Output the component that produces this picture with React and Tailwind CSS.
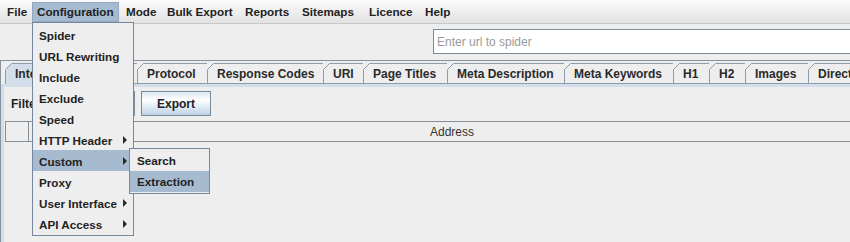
import React from "react";

function Arrow() {
  return (
    <svg width="4" height="8" viewBox="0 0 4 8" className="absolute right-[6px] top-[7px]">
      <polygon points="0,0 4,4 0,8" fill="#2a2a2a" />
    </svg>
  );
}

function Tab({ label, w, selected }) {
  return (
    <div
      className={
        selected
          ? "relative shrink-0 h-[21px] border-l border-t border-[#8c9cac] bg-[#d3deea] flex items-center pl-[9px] whitespace-nowrap"
          : "relative shrink-0 h-[21px] border-l border-t border-b border-[#8c9cac] bg-[#eeeeee] flex items-center pl-[9px] whitespace-nowrap"
      }
      style={{ width: w }}
    >
      <svg width="7" height="7" viewBox="0 0 7 7" className="absolute left-[-1px] top-[-1px]">
        <polygon points="0,0 7,0 0,7" fill="#eeeeee" />
        <line x1="0.5" y1="6.5" x2="6.5" y2="0.5" stroke="#8c9cac" strokeWidth="1" />
      </svg>
      {label}
    </div>
  );
}

const menuItems = [
  { label: "Spider" },
  { label: "URL Rewriting" },
  { label: "Include" },
  { label: "Exclude" },
  { label: "Speed" },
  { label: "HTTP Header", arrow: true },
  { label: "Custom", arrow: true, active: true },
  { label: "Proxy" },
  { label: "User Interface", arrow: true },
  { label: "API Access", arrow: true },
];

const tabs = [
  { label: "Internal", w: 65, selected: true },
  { label: "External", w: 67 },
  { label: "Protocol", w: 70 },
  { label: "Response Codes", w: 116 },
  { label: "URI", w: 40 },
  { label: "Page Titles", w: 84 },
  { label: "Meta Description", w: 117 },
  { label: "Meta Keywords", w: 109 },
  { label: "H1", w: 36 },
  { label: "H2", w: 36 },
  { label: "Images", w: 63 },
  { label: "Directives", w: 80 },
];

export default function App() {
  return (
    <div className="relative w-[850px] h-[242px] overflow-hidden bg-[#eeeeee] font-['Liberation_Sans',Arial,sans-serif] text-[#222222]">
      {/* Menu bar */}
      <div className="flex h-[24px] pt-[2px] pl-[2px] border-b border-[#c8c8c8] bg-linear-to-b from-[#fbfbfb] to-[#e2e2e2] text-[11.7px] font-bold">
        <div className="h-[20px] w-[30px] pl-[5px] flex items-center">File</div>
        <div className="h-[20px] w-[87px] pl-[4px] flex items-center bg-[#a6bbd0] border border-[#93a9c0]">Configuration</div>
        <div className="h-[20px] w-[43px] pl-[7px] flex items-center">Mode</div>
        <div className="h-[20px] w-[78px] pl-[5px] flex items-center">Bulk Export</div>
        <div className="h-[20px] w-[57px] pl-[5px] flex items-center">Reports</div>
        <div className="h-[20px] w-[67px] pl-[5px] flex items-center">Sitemaps</div>
        <div className="h-[20px] w-[56px] pl-[5px] flex items-center">Licence</div>
        <div className="h-[20px] w-[50px] pl-[5px] flex items-center">Help</div>
      </div>

      {/* Toolbar */}
      <div className="h-[36px] pl-[433px] pt-[5px]">
        <div className="w-[430px] h-[25px] border border-[#7a8a99] bg-white flex items-center pl-[3px] text-[12px] text-[#9a9a9a] whitespace-nowrap">
          Enter url to spider
        </div>
      </div>

      {/* Tabbed panel */}
      <div className="border-t border-l border-[#8593a3] pt-[2px] h-[182px]">
        <div className="flex pl-[4px] text-[12px] font-bold text-[#2a2a2a]">
          {tabs.map((t) => (
            <Tab key={t.label} label={t.label} w={t.w} selected={t.selected} />
          ))}
        </div>
        <div className="h-[3px] bg-[#d3deea]" />
        <div className="border-l-[3px] border-[#d3deea] h-[160px] pt-[4px]">
          <div className="flex items-center h-[25px] pl-[7px]">
            <div className="text-[12px] font-bold w-[38px] whitespace-nowrap">Filter</div>
            <div className="w-[86px] h-[25px] border border-[#7a8a99] bg-[#f4f6f8]" />
            <div className="ml-[6px] w-[70px] h-[25px] border border-[#7a8a99] bg-linear-to-b from-[#dde8f3] via-white via-35% to-[#bfd2e6] flex items-center justify-center text-[12px] font-bold">
              Export
            </div>
          </div>
          <div className="flex ml-[1px] mt-[5px] h-[21px]">
            <div className="w-[24px] h-[21px] border border-[#858d96] shrink-0" />
            <div className="w-[846px] shrink-0 h-[21px] border-t border-b border-[#858d96] flex items-center justify-center text-[12px] text-[#333333]">
              Address
            </div>
          </div>
        </div>
      </div>

      {/* Configuration dropdown menu */}
      <div className="absolute left-[32px] top-[22px] w-[102px] py-[1px] border border-[#7687a2] bg-[#eeeeee] text-[11.7px] font-bold">
        {menuItems.map((m) => (
          <div
            key={m.label}
            className={
              m.active
                ? "relative h-[21px] flex items-center pl-[6px] pt-[2px] bg-[#a6bbd0] whitespace-nowrap"
                : "relative h-[21px] flex items-center pl-[6px] pt-[2px] whitespace-nowrap"
            }
          >
            {m.label}
            {m.arrow ? <Arrow /> : null}
          </div>
        ))}
      </div>

      {/* Custom submenu */}
      <div className="absolute left-[129px] top-[148px] w-[81px] py-[1px] border border-[#7687a2] bg-[#eeeeee] text-[11.7px] font-bold">
        <div className="h-[21px] flex items-center pl-[7px] pt-[1px]">Search</div>
        <div className="h-[21px] flex items-center pl-[7px] pt-[1px] bg-[#a6bbd0]">Extraction</div>
      </div>
    </div>
  );
}
